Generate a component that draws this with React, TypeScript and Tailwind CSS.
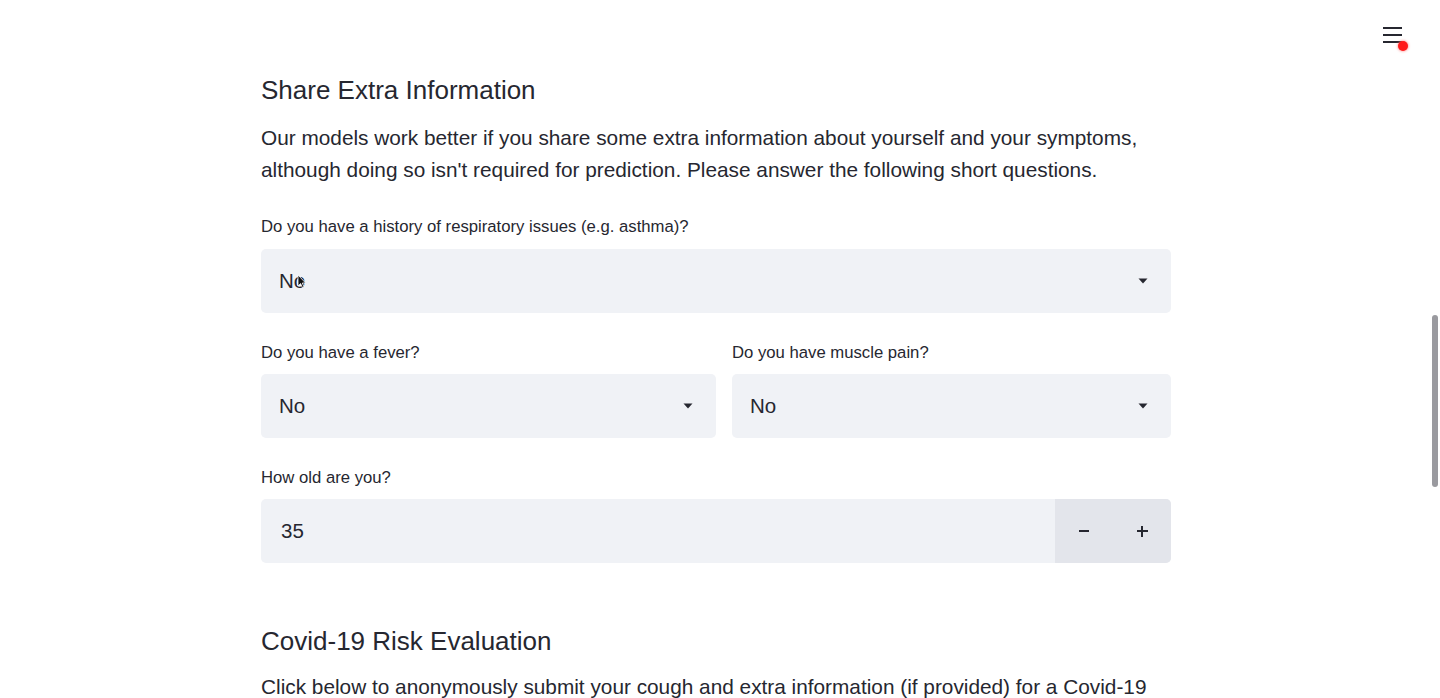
import { ReactNode } from "react";

const font = { fontFamily: '"Liberation Sans", Arial, sans-serif' };

function Caret() {
	return (
		<svg width="10" height="6" viewBox="0 0 10 6" className="shrink-0">
			<path d="M0.5 0.5 L9.5 0.5 L5 5.5 Z" fill="#262730" />
		</svg>
	);
}

function Label({ children }: { children: ReactNode }) {
	return <div className="text-[16.7px] leading-[20px] text-[#262730]">{children}</div>;
}

function SelectBox({ value, cursor }: { value: string; cursor?: boolean }) {
	return (
		<div className="relative flex h-[64px] items-center justify-between rounded-[5px] bg-[#f0f2f6] pl-[18px] pr-[23px]">
			<span className="text-[20.5px] text-[#262730]">{value}</span>
			<Caret />
			{cursor && (
				<svg
					width="10"
					height="15"
					viewBox="0 0 10 15"
					className="absolute left-[36px] top-[25px]"
				>
					<path
						d="M1 1 L1 12 L3.6 9.6 L5.4 13.6 L7 12.9 L5.3 9 L8.6 9 Z"
						fill="#111"
						stroke="#fff"
						strokeWidth="0.8"
					/>
				</svg>
			)}
		</div>
	);
}

function NumberBox({ value }: { value: number }) {
	return (
		<div className="flex h-[64px] overflow-hidden rounded-[5px] bg-[#f0f2f6]">
			<div className="flex flex-1 items-center pl-[20px] text-[20.5px] text-[#262730]">
				{value}
			</div>
			<div className="flex w-[116px] bg-[#e3e5eb]">
				<button type="button" className="flex flex-1 items-center justify-center">
					<span className="block h-[2px] w-[10px] bg-[#262730]" />
				</button>
				<button type="button" className="relative flex flex-1 items-center justify-center">
					<span className="block h-[2px] w-[11px] bg-[#262730]" />
					<span className="absolute h-[11px] w-[2px] bg-[#262730]" />
				</button>
			</div>
		</div>
	);
}

export default function App() {
	return (
		<div className="flex h-[698px] w-[1440px] flex-col overflow-hidden bg-white" style={font}>
			<div className="h-[3px] w-full bg-gradient-to-r from-[#ff2b5b] via-[#ff8f5a] to-[#fffd80]" />
			<div className="relative flex flex-1">
				<main className="flex flex-1 justify-center">
					<div className="w-[910px] pt-[75px] text-[#262730]">
						<h3 className="text-[26px] leading-[31px]">Share Extra Information</h3>
						<p className="mt-[16px] text-[20.8px] leading-[32px]">
							Our models work better if you share some extra information about yourself and
							your symptoms, although doing so isn't required for prediction. Please answer
							the following short questions.
						</p>
						<div className="mt-[31px] flex flex-col gap-[12px]">
							<Label>Do you have a history of respiratory issues (e.g. asthma)?</Label>
							<SelectBox value="No" cursor />
						</div>
						<div className="mt-[30px] grid grid-cols-[455px_439px] gap-[16px]">
							<div className="flex flex-col gap-[11px]">
								<Label>Do you have a fever?</Label>
								<SelectBox value="No" />
							</div>
							<div className="flex flex-col gap-[11px]">
								<Label>Do you have muscle pain?</Label>
								<SelectBox value="No" />
							</div>
						</div>
						<div className="mt-[30px] flex flex-col gap-[11px]">
							<Label>How old are you?</Label>
							<NumberBox value={35} />
						</div>
						<h3 className="mt-[63px] text-[26px] leading-[31px]">Covid-19 Risk Evaluation</h3>
						<p className="mt-[14px] text-[20.8px] leading-[32px]">
							Click below to anonymously submit your cough and extra information (if provided)
							for a Covid-19 risk evaluation.
						</p>
					</div>
				</main>
				<div className="w-[8px] pt-[315px]">
					<div className="h-[172px] w-[6px] rounded-full bg-[#9a9a9f]" />
				</div>
				<button type="button" className="absolute right-[34px] top-[26px] h-[24px] w-[24px]">
					<span className="absolute left-[1px] top-[1px] block h-[2px] w-[19px] bg-[#262730]" />
					<span className="absolute left-[1px] top-[8px] block h-[2px] w-[19px] bg-[#262730]" />
					<span className="absolute left-[1px] top-[15px] block h-[2px] w-[19px] bg-[#262730]" />
					<span className="absolute left-[16px] top-[15px] block h-[10px] w-[10px] rounded-full bg-[#ff1a1a] shadow-[0_0_3px_#ff6b6b]" />
				</button>
			</div>
		</div>
	);
}
